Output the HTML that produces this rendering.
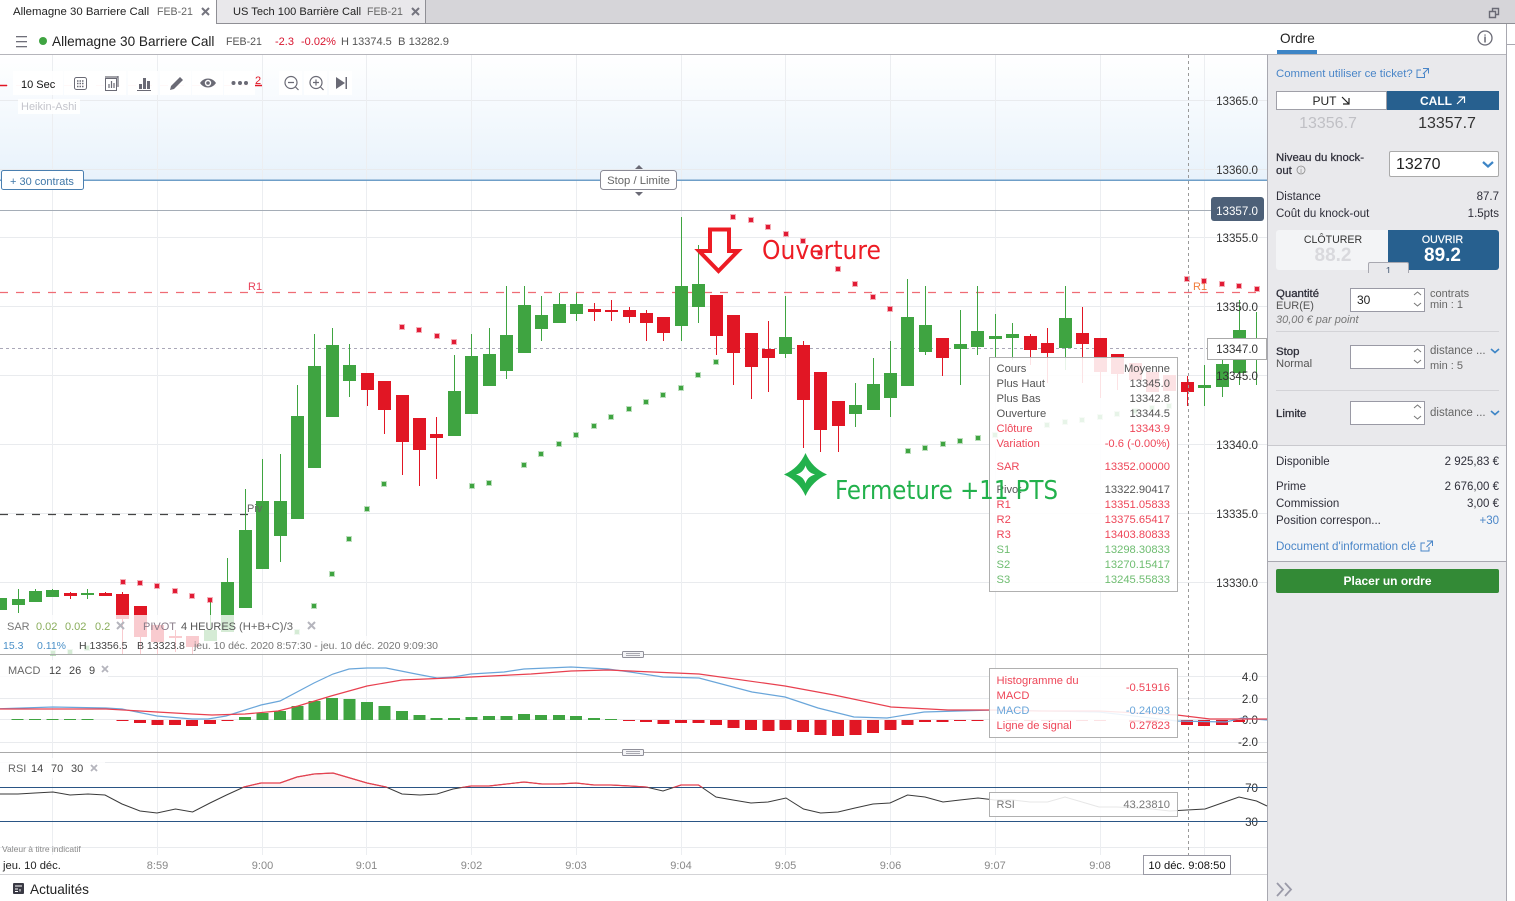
<!DOCTYPE html>
<html lang="fr"><head><meta charset="utf-8"><title>Allemagne 30 Barriere Call</title>
<style>
html,body{margin:0;padding:0;background:#fff}
body{position:relative;width:1515px;height:901px;overflow:hidden;font-family:"Liberation Sans",sans-serif;color:#2f2f3a;font-size:11.5px}
.a{position:absolute;white-space:nowrap;line-height:14px}
.r{text-align:right}
.b{font-weight:bold}
.lnk{color:#4a86c8}
.inp{position:absolute;left:1350px;width:73px;background:#fff;border:1px solid #9a9aa5;box-sizing:content-box}
svg{position:absolute;left:0;top:0}
text{font-family:"Liberation Sans",sans-serif}
</style></head><body>
<!-- tabs -->
<div class="a" style="left:0;top:0;width:1515px;height:23px;background:#d6d5d9"></div>
<div class="a" style="left:0;top:0;width:216px;height:24px;background:#fff"></div>
<div class="a" style="left:216px;top:0;width:210px;height:23px;background:#e9e8eb;border-left:1px solid #8f8f95;border-right:1px solid #8f8f95;box-sizing:border-box"></div>
<div class="a" style="left:216px;top:23px;width:1299px;height:1px;background:#8f8f95"></div>
<div class="a" style="left:13px;top:5px;font-size:11.4px;color:#222">Allemagne 30 Barriere Call</div>
<div class="a" style="left:157px;top:5px;font-size:10.6px;color:#666">FEB-21</div>
<div class="a" style="left:233px;top:5px;font-size:11.1px;color:#222">US Tech 100 Barrière Call</div>
<div class="a" style="left:367px;top:5px;font-size:10.6px;color:#666">FEB-21</div>
<!-- subheader -->
<div class="a" style="left:0;top:54px;width:1267px;height:1px;background:#b5b5bb"></div>
<div class="a" style="left:52px;top:35px;font-size:13.6px;color:#222">Allemagne 30 Barriere Call</div>
<div class="a" style="left:226px;top:35px;font-size:10.6px;color:#555">FEB-21</div>
<div class="a" style="left:275px;top:35px;font-size:11px;color:#d8152f">-2.3</div>
<div class="a" style="left:301px;top:35px;font-size:11px;color:#d8152f">-0.02%</div>
<div class="a" style="left:341px;top:35px;font-size:11px;color:#555">H 13374.5</div>
<div class="a" style="left:398px;top:35px;font-size:11.2px;color:#555">B 13282.9</div>
<!-- right panel -->
<div class="a" style="left:1267px;top:54px;width:240px;height:847px;background:#e9e9ec;border-left:1px solid #a8a8b0;border-right:1px solid #a8a8b0;border-top:1px solid #b5b5bb;box-sizing:border-box"></div>
<div class="a" style="left:1268px;top:445px;width:238px;height:115px;background:#f3f4f6;border-top:1px solid #c9c9ce;border-bottom:1px solid #a8a8b0"></div>
<div class="a" style="left:1506px;top:24px;width:1px;height:31px;background:#a8a8b0"></div>
<div class="a" style="left:1507px;top:44px;width:8px;height:1px;background:#a8a8b0"></div>
<div class="a" style="left:1280px;top:32px;font-size:13.6px;color:#222">Ordre</div>
<div class="a" style="left:1277px;top:50px;width:40px;height:4px;background:#3d85c6"></div>
<div class="a lnk" style="left:1276px;top:67px;font-size:11.4px">Comment utiliser ce ticket?</div>
<div class="a" style="left:1276px;top:91px;width:111px;height:19px;background:#fff;border:1px solid #a0a0a8;box-sizing:border-box;text-align:center;font-size:12px;color:#222;line-height:18px;padding-right:14px">PUT</div>
<div class="a" style="left:1387px;top:91px;width:112px;height:19px;background:#27608f;text-align:center;font-size:12px;color:#fff;line-height:20px;font-weight:bold;padding-right:14px;box-sizing:border-box">CALL</div>
<div class="a" style="left:1276px;top:115px;width:104px;text-align:center;font-size:16px;line-height:18px;color:#c0c0c5">13356.7</div>
<div class="a" style="left:1395px;top:115px;width:104px;text-align:center;font-size:16px;line-height:18px;color:#333">13357.7</div>
<div class="a" style="left:1276px;top:152px;color:#2f2f3a;font-size:11.4px;line-height:13px;-webkit-text-stroke:.25px #2f2f3a">Niveau du knock-<br>out</div>
<div class="a" style="left:1389px;top:151px;width:110px;height:26px;background:#fff;border:1px solid #aaa;border-radius:2px;box-sizing:border-box;font-size:16px;line-height:26px;padding-left:6px;color:#222">13270</div>
<div class="a" style="left:1276px;top:190px">Distance</div><div class="a r" style="left:1440px;width:59px;top:190px">87.7</div>
<div class="a" style="left:1276px;top:207px">Coût du knock-out</div><div class="a r" style="left:1440px;width:59px;top:207px">1.5pts</div>
<div class="a" style="left:1276px;top:230px;width:112px;height:40px;background:#f3f4f6;border-radius:3px 0 0 3px"></div>
<div class="a" style="left:1388px;top:230px;width:111px;height:40px;background:#27608f;border-radius:0 3px 3px 0"></div>
<div class="a" style="left:1276px;top:233px;width:114px;text-align:center;color:#333;font-size:10.6px">CLÔTURER</div>
<div class="a" style="left:1276px;top:246px;width:114px;text-align:center;font-size:19px;line-height:19px;font-weight:bold;color:#d9d9dd">88.2</div>
<div class="a" style="left:1388px;top:233px;width:109px;text-align:center;color:#fff;font-size:10.6px;-webkit-text-stroke:.2px #fff">OUVRIR</div>
<div class="a" style="left:1388px;top:246px;width:109px;text-align:center;font-size:19px;line-height:19px;font-weight:bold;color:#fff">89.2</div>
<div class="a" style="left:1368px;top:262px;width:39px;height:10px;background:#e9e9ec;border:1px solid #a8a8b0;border-bottom:0;border-radius:2px 2px 0 0;text-align:center;font-size:10px;line-height:17px;color:#4d6078;overflow:hidden">1</div>
<div class="a b" style="left:1276px;top:287px;font-size:11.4px;font-weight:normal;-webkit-text-stroke:.3px #2f2f3a">Quantité</div>
<div class="a" style="left:1276px;top:299px;color:#555;font-size:11px">EUR(E)</div>
<div class="a" style="left:1276px;top:313px;font-style:italic;color:#777;font-size:11px">30,00 € par point</div>
<div class="inp" style="top:288px;height:22px;font-size:12px;line-height:22px;padding-left:0;text-indent:6px;color:#222">30</div>
<div class="a" style="left:1430px;top:287px;color:#666;font-size:11px">contrats</div>
<div class="a" style="left:1430px;top:298px;color:#666;font-size:11px">min : 1</div>
<div class="a" style="left:1276px;top:331px;width:223px;height:1px;background:#d3d3d7"></div>
<div class="a" style="left:1276px;top:345px;font-size:11.4px;-webkit-text-stroke:.3px #2f2f3a">Stop</div>
<div class="a" style="left:1276px;top:357px;color:#555;font-size:11.2px">Normal</div>
<div class="inp" style="top:345px;height:22px"></div>
<div class="a" style="left:1430px;top:344px;color:#666">distance ...</div>
<div class="a" style="left:1430px;top:359px;color:#666;font-size:11px">min : 5</div>
<div class="a" style="left:1276px;top:390px;width:223px;height:1px;background:#d3d3d7"></div>
<div class="a" style="left:1276px;top:407px;font-size:11.4px;-webkit-text-stroke:.3px #2f2f3a">Limite</div>
<div class="inp" style="top:401px;height:22px"></div>
<div class="a" style="left:1430px;top:406px;color:#666">distance ...</div>
<div class="a" style="left:1276px;top:455px">Disponible</div><div class="a r" style="left:1420px;width:79px;top:455px">2 925,83 €</div>
<div class="a" style="left:1276px;top:480px">Prime</div><div class="a r" style="left:1420px;width:79px;top:480px">2 676,00 €</div>
<div class="a" style="left:1276px;top:497px">Commission</div><div class="a r" style="left:1420px;width:79px;top:497px">3,00 €</div>
<div class="a" style="left:1276px;top:514px">Position correspon...</div><div class="a r lnk" style="left:1420px;width:79px;top:514px">+30</div>
<div class="a lnk" style="left:1276px;top:540px;font-size:11.6px">Document d'information clé</div>
<div class="a" style="left:1276px;top:569px;width:223px;height:24px;background:#338a36;border-radius:2px;color:#fff;font-weight:bold;font-size:12px;line-height:24px;text-align:center">Placer un ordre</div>
<div class="a" style="left:30px;top:883px;font-size:13.6px;color:#222">Actualités</div>

<svg width="1515" height="901" viewBox="0 0 1515 901" xmlns="http://www.w3.org/2000/svg">
<defs>
<linearGradient id="g" x1="0" y1="0" x2="0" y2="1"><stop offset="0" stop-color="#fff"/><stop offset="1" stop-color="#e8f2fb"/></linearGradient>
<clipPath id="up"><rect x="0" y="760" width="1267" height="27.5"/></clipPath>
</defs>
<!-- top small icons -->
<path d="M202 8l7 7M209 8l-7 7M412 8l7 7M419 8l-7 7" stroke="#75757f" stroke-width="2" fill="none"/>
<g fill="#6f6f7a"><rect x="16" y="36" width="11" height="1.3"/><rect x="16" y="41" width="11" height="1.3"/><rect x="16" y="46" width="11" height="1.3"/></g>
<circle cx="43" cy="41" r="4" fill="#3fa441"/>
<path d="M1489.5 11.5h6v6h-6zM1492.5 11v-2.5h6v6h-3" fill="none" stroke="#6a6a75" stroke-width="1.4"/>
<circle cx="1485" cy="38" r="7" fill="none" stroke="#6a6a75" stroke-width="1.3"/><text x="1485" y="42.5" font-size="11" font-weight="bold" fill="#6a6a75" text-anchor="middle">i</text>
<path d="M1421 70h-4v7.5h7.5v-4M1423 68.5h5.5v5M1428 69l-5 5" fill="none" stroke="#4a86c8"/>
<path d="M1425 543h-4v8h8v-4M1427 541h5.5v5M1432 541.5l-5.500 5.500" fill="none" stroke="#4a86c8"/>
<path d="M1342 97l7 7M1349 98v6h-6" fill="none" stroke="#222" stroke-width="1.2"/>
<path d="M1457 104l7-7M1458.500 97h6v6" fill="none" stroke="#fff" stroke-width="1.2"/>
<circle cx="1301" cy="170" r="4" fill="none" stroke="#888" stroke-width=".8"/><text x="1301" y="173" font-size="7" fill="#888" text-anchor="middle">i</text>
<path d="M1483 162l5 4.500 5-4.500" fill="none" stroke="#3d85c6" stroke-width="2.200"/>
<path d="M1414 295l3.500-3 3.500 3M1414 303l3.500 3 3.500-3M1414 352l3.500-3 3.500 3M1414 360l3.500 3 3.500-3M1414 408l3.500-3 3.500 3M1414 416l3.500 3 3.500-3" fill="none" stroke="#777"/>
<path d="M1491 349l4 3.500 4-3.500M1491 411l4 3.500 4-3.500" fill="none" stroke="#3d85c6" stroke-width="1.600"/>
<path d="M1277 883l6 6.500-6 6.500M1285 883l6 6.500-6 6.500" fill="none" stroke="#9a9aa8" stroke-width="1.800"/>
<!-- news icon -->
<rect x="13" y="883" width="11" height="11" rx="1" fill="#3a3a45"/><path d="M15 886h7M15 889h3M15 891.500h3M20 889v2.500" stroke="#fff"/>

<!-- chart bg -->
<rect x="0" y="55" width="1267" height="125" fill="url(#g)"/>
<!-- grid -->
<path d="M0 100.500H1267M0 169.500H1267M0 237.500H1267M0 306.500H1267M0 375.500H1267M0 444.500H1267M0 513.500H1267M0 582.500H1267M0 676.500H1267M0 698.500H1267M0 719.500H1267M0 742.500H1267M0 762.500H1267M0 847.500H1267" stroke="#e9ebee"/>
<path d="M52.500 55V855M157.500 55V855M262.500 55V855M366.500 55V855M471.500 55V855M576.500 55V855M681.500 55V855M785.500 55V855M890.500 55V855M995.500 55V855M1100.500 55V855M1204.500 55V855" stroke="#eceef1"/>
<!-- level lines -->
<path d="M0 85.500H262" stroke="#f9c2c6" stroke-dasharray="8 8"/>
<path d="M0 85.500H7M255 85.500H262" stroke="#e11624" stroke-width="1.500"/>
<rect x="0" y="179.500" width="1267" height="1.500" fill="#6f9fc8"/>
<path d="M0 210.500H1212" stroke="#a5adb7"/>
<path d="M0 292.500H1262" stroke="#ef6c74" stroke-width="1.200" stroke-dasharray="8 8"/>
<path d="M0 514.500H262" stroke="#444" stroke-width="1.200" stroke-dasharray="8 8"/>
<text x="248" y="290" font-size="11" fill="#e8425a">R1</text>
<text x="1193" y="290" font-size="11" fill="#f07d3c">R1</text>
<path d="M0 348.500H1210" stroke="#aaa8b8" stroke-dasharray="3 3"/>
<!-- wicks -->
<path fill="none" stroke="#3fa441" d="M18.500 589V613M35.500 589V591M52.500 589V590M87.500 589V599M210.500 602V641M227.500 558V582M245.500 489V530M262.500 459V501M280.500 454V562M297.500 385V416M314.500 334V366M332.500 328V345M349.500 344V397M454.500 355V391M471.500 334V356M489.500 328V354M506.500 286V379M524.500 286V305M541.500 296V341M559.500 293V304M576.500 293V321M681.500 217V341M698.500 245V323M785.500 296V358M855.500 383V427M873.500 358V384M890.500 341V417M907.500 279V317M925.500 286V355M960.500 310V385M977.500 286V355M995.500 314V357M1012.500 323V360M1065.500 286V370M1204.500 365V406M1222.500 357V397M1239.500 300V385M1256.500 312V385"/>
<path fill="none" stroke="#e11624" d="M70.500 592V599M105.500 592V596M122.500 592V654M140.500 606V654M157.500 625V654M175.500 630V652M192.500 636V654M367.500 373V406M384.500 381V434M402.500 395V475M419.500 418V486M436.500 417V479M594.500 303V321M611.500 300V321M629.500 307V323M646.500 310V341M663.500 317V341M716.500 295V355M733.500 315V385M751.500 333V399M768.500 321V392M803.500 341V448M820.500 372V452M838.500 401V452M942.500 338V376M1030.500 334V365M1047.500 328V383M1082.500 307V383M1100.500 338V398M1117.500 354V390M1187.500 376V406"/>
<!-- bodies -->
<path fill="none" stroke="#3fa441" stroke-width="13" d="M0.500 598V610M18.500 599V605M35.500 591V602M52.500 590V597M87.500 593V595M210.500 630V641M227.500 582V632M245.500 530V608M262.500 501V569M280.500 501V536M297.500 416V519M314.500 366V468M332.500 345V417M349.500 365V381M454.500 391V436M471.500 356V414M489.500 354V386M506.500 335V371M524.500 305V353M541.500 315V329M559.500 304V323M576.500 304V314M681.500 286V326M698.500 284V307M785.500 337V354M855.500 405V414M873.500 384V410M890.500 373V398M907.500 317V386M925.500 325V352M960.500 344V349M977.500 331V347M995.500 336V339M1012.500 334V338M1065.500 318V348M1204.500 385V388M1222.500 364V387M1239.500 330V373"/>
<path fill="none" stroke="#e11624" stroke-width="13" d="M70.500 593V596M105.500 593V596M122.500 594V619M140.500 606V637M157.500 625V642M175.500 636V638M192.500 636V647M367.500 373V390M384.500 381V410M402.500 395V442M419.500 418V450M436.500 434V438M594.500 309V312M611.500 310V312M629.500 310V317M646.500 313V323M663.500 317V333M716.500 295V336M733.500 315V353M751.500 333V367M768.500 349V358M803.500 345V400M820.500 372V430M838.500 401V426M942.500 338V358M1030.500 336V350M1047.500 343V353M1082.500 333V344M1100.500 338V372M1117.500 354V374M1135.500 363V380M1152.500 372V392M1169.500 375V391M1187.500 382V392"/>
<!-- SAR dots -->
<g fill="none" stroke-linecap="butt">
<path stroke="#e11c35" stroke-opacity=".35" stroke-width="6" d="M120 582h6M137 583h6M154 586h6M172 591h6M189 596h6M207 600h6M399 327h6M416 330h6M434 336h6M451 342h6M730 217h6M748 220h6M765 227h6M783 234h6M800 241h6M817 253h6M835 269h6M852 284h6M870 297h6M887 309h6M1184 279h6M1201 281h6M1219 284h6M1236 286h6M1254 289h6"/>
<path stroke="#e11c35" stroke-width="4" d="M121 582h4M138 583h4M155 586h4M173 591h4M190 596h4M208 600h4M400 327h4M417 330h4M435 336h4M452 342h4M731 217h4M749 220h4M766 227h4M784 234h4M801 241h4M818 253h4M836 269h4M853 284h4M871 297h4M888 309h4M1185 279h4M1202 281h4M1220 284h4M1237 286h4M1255 289h4"/>
<path stroke="#3fa441" stroke-opacity=".35" stroke-width="6" d="M50 653h6M67 652h6M84 648h6M294 632h6M311 606h6M329 574h6M346 539h6M364 509h6M381 484h6M469 486h6M486 483h6M521 465h6M538 454h6M556 444h6M573 435h6M591 426h6M608 417h6M626 409h6M643 402h6M660 395h6M678 388h6M695 375h6M713 362h6M905 451h6M922 448h6M940 444h6M957 441h6M975 438h6M992 435h6M1044 425h6M1062 422h6M1079 420h6M1097 417h6M1114 414h6M1132 411h6M1149 408h6M1166 406h6"/>
<path stroke="#3fa441" stroke-width="4" d="M51 653h4M68 652h4M85 648h4M295 632h4M312 606h4M330 574h4M347 539h4M365 509h4M382 484h4M470 486h4M487 483h4M522 465h4M539 454h4M557 444h4M574 435h4M592 426h4M609 417h4M627 409h4M644 402h4M661 395h4M679 388h4M696 375h4M714 362h4M906 451h4M923 448h4M941 444h4M958 441h4M976 438h4M993 435h4M1045 425h4M1063 422h4M1080 420h4M1098 417h4M1115 414h4M1133 411h4M1150 408h4M1167 406h4"/>
</g>
<!-- axis labels -->
<g font-size="11.600" fill="#333" text-anchor="end">
<text x="1258" y="105">13365.0</text><text x="1258" y="174">13360.0</text><text x="1258" y="242">13355.0</text><text x="1258" y="311">13350.0</text><text x="1258" y="380">13345.0</text><text x="1258" y="449">13340.0</text><text x="1258" y="518">13335.0</text><text x="1258" y="587">13330.0</text>
<text x="1258" y="681">4.0</text><text x="1258" y="703">2.0</text><text x="1258" y="724">0.0</text><text x="1258" y="746">-2.0</text>
<text x="1258" y="792">70</text><text x="1258" y="826">30</text>
</g>
<rect x="1211" y="197" width="53" height="24" rx="3" fill="#4d6078"/><text x="1258" y="215" font-size="11.600" fill="#fff" text-anchor="end">13357.0</text>
<rect x="1207.500" y="338.500" width="59" height="21" fill="#fff" stroke="#aaa"/><text x="1258" y="353" font-size="11.600" fill="#333" text-anchor="end">13347.0</text>
<!-- crosshair vertical -->
<path d="M1188.500 55V855" stroke="#999" stroke-dasharray="3 3"/>
<!-- order labels -->
<rect x="1.500" y="170.500" width="82" height="19" rx="2" fill="#fff" stroke="#4a7fb0"/>
<text x="10" y="185" font-size="11" fill="#3f77a8">+ 30 contrats</text>
<path d="M635 169l4-4 4 4zM635 192l4 4 4-4z" fill="#6a6a75"/>
<rect x="600.500" y="170.500" width="76" height="19" rx="3" fill="#fff" stroke="#8a8a95"/>
<text x="638.500" y="184" font-size="11.300" fill="#666" text-anchor="middle">Stop / Limite</text>
<!-- toolbar -->
<g fill="#fff" fill-opacity=".88">
<rect x="13" y="71" width="50" height="24"/><rect x="64" y="71" width="32" height="24"/><rect x="96" y="71" width="30" height="24"/><rect x="128" y="71" width="30" height="24"/><rect x="160" y="71" width="31" height="24"/><rect x="192" y="71" width="31" height="24"/><rect x="224" y="71" width="31" height="24"/><rect x="279" y="71" width="23" height="24"/><rect x="304" y="71" width="23" height="24"/><rect x="329" y="71" width="23" height="24"/><rect x="18" y="99" width="62" height="15"/>
</g>
<text x="21" y="88" font-size="11" fill="#111">10 Sec</text>
<text x="21" y="110" font-size="11" fill="#c4c5cc">Heikin-Ashi</text>
<text x="255" y="84" font-size="11" fill="#e11624">2</text>
<rect x="74.500" y="77.500" width="12" height="12" rx="2" fill="none" stroke="#6a6a75"/>
<path d="M77 81h7M77 83.500h7M77 86.500h7" stroke="#6a6a75" stroke-width="1.500" stroke-dasharray="1.500 1"/>
<rect x="105.500" y="78.500" width="11" height="12" fill="none" stroke="#6a6a75"/><path d="M105 77h13M109 84v4M111.500 81v7M114 83v5M118 76v11" stroke="#6a6a75" fill="none" stroke-width="1.200"/>
<path d="M139 84h3v5h-3zM143 78h3v11h-3zM147 81h3v8h-3zM137 90h14v1h-14z" fill="#6a6a75"/>
<path d="M170 90l1-4 9-9 3 3-9 9z" fill="#6a6a75"/>
<path d="M200 83c4-6 12-6 16 0-4 6-12 6-16 0z" fill="#6a6a75"/><circle cx="208" cy="83" r="3.200" fill="#fff"/><circle cx="208" cy="83" r="1.800" fill="#6a6a75"/>
<circle cx="233.500" cy="83" r="2" fill="#6a6a75"/><circle cx="240" cy="83" r="2" fill="#6a6a75"/><circle cx="246" cy="83" r="2" fill="#6a6a75"/>
<g fill="none" stroke="#6a6a75" stroke-width="1.200"><circle cx="291" cy="82.500" r="6"/><path d="M288 82.500h6M295.500 87l3 3"/><circle cx="316" cy="82.500" r="6"/><path d="M313 82.500h6M316 79.500v6M320.500 87l3 3"/></g>
<path d="M336 77l9 6-9 6z M345.500 77h1.500v12h-1.500z" fill="#6a6a75"/>
<!-- annotations -->
<polygon points="710,229.500 729,229.500 729,251 738,251 718.500,271 699,251 710,251" fill="#fff" stroke="#ed1c24" stroke-width="4"/>
<text x="762" y="259" font-size="26" fill="#ed1c24" textLength="119" lengthAdjust="spacingAndGlyphs" style="font-family:'DejaVu Sans',sans-serif">Ouverture</text>
<path d="M805.500 453Q812 468 827 474.500Q812 481 805.500 496Q799 481 784 474.500Q799 468 805.500 453Z" fill="#22b14c"/>
<path d="M805.500 465.500Q807.500 472.500 815 474.500Q807.500 476.500 805.500 483.500Q803.500 476.500 796 474.500Q803.500 472.500 805.500 465.500Z" fill="#fff"/>
<text x="247" y="512" font-size="11" fill="#666">Piv</text>
<!-- legend overlay -->
<rect x="0" y="615" width="320" height="39" fill="#fff" fill-opacity=".78"/>
<rect x="320" y="636" width="120" height="18" fill="#fff" fill-opacity=".78"/>
<g font-size="11">
<text x="7" y="630" fill="#777">SAR</text><text x="36" y="630" fill="#89ad5b">0.02</text><text x="65" y="630" fill="#89ad5b">0.02</text><text x="95" y="630" fill="#89ad5b">0.2</text>
<text x="143" y="630" fill="#8a7d8a">PIVOT</text><text x="181" y="630" fill="#555">4 HEURES</text><text x="239" y="630" font-size="11.300" fill="#666">(H+B+C)/3</text>
</g>
<path d="M117 622l7 7M124 622l-7 7M308 622l7 7M315 622l-7 7" stroke="#b5b5bd" stroke-width="2"/>
<g font-size="10.500">
<text x="3" y="649" fill="#4a90c8">15.3</text><text x="37" y="649" fill="#4a90c8">0.11%</text><text x="79" y="649" fill="#444">H 13356.5</text><text x="137" y="649" fill="#444">B 13323.8</text><text x="194" y="649" fill="#777" textLength="244">jeu. 10 déc. 2020 8:57:30 - jeu. 10 déc. 2020 9:09:30</text>
</g>
<!-- panel separators -->
<path d="M0 654.500H1267M0 752.500H1267" stroke="#a9a9a9"/>
<rect x="622.500" y="651.500" width="21" height="6" rx="1" fill="#f4f4f6" stroke="#8f8f99"/><path d="M626 653.500h14M626 655.500h14" stroke="#8f8f99" stroke-width=".8"/>
<rect x="622.500" y="749.500" width="21" height="6" rx="1" fill="#f4f4f6" stroke="#8f8f99"/><path d="M626 751.500h14M626 753.500h14" stroke="#8f8f99" stroke-width=".8"/>
<!-- MACD histogram -->
<path fill="none" stroke="#3fa441" stroke-width="12" d="M17.500 719V720M35 719V720M52.500 719V720M70 719V720M87.500 719V720M245 717V720M262.500 713V720M280 711V720M297.500 706V720M314.500 701V720M332 698V720M349.500 699V720M367 702V720M384.500 706V720M402 711V720M419.500 715V720M436.500 718V720M454 718V720M471.500 717V720M489 716V720M506.500 716V720M524 714V720M541 715V720M559 715V720M576 716V720M594 718V720M611 719V720"/>
<path fill="none" stroke="#e11624" stroke-width="12" d="M122.500 720V721M140 720V723M157.500 720V725M175 720V725M192 720V726M210 720V724M227.500 720V721M629 720V721M646 720V722M663.500 720V724M681 720V723M698.500 720V723M716 720V725M733.500 720V728M751 720V730M768.500 720V731M785.500 720V730M803 720V732M820.500 720V735M838 720V736M855.500 720V735M873 720V733M890.500 720V730M907.500 720V725M925 720V722M942.500 720V722M960 720V721M977.500 720V721M1012 720V721M1030 720V721M1047 720V721M1065 720V721M1082 720V721M1100 720V721M1135 720V722M1152 720V722M1187 720V725M1204 720V726M1222 720V725M1239 720V722"/>
<path fill="none" stroke="#6aa6da" stroke-width="1.200" d="M0 708.700L53 707L106 708L122 709L157 716L192 719L208 719L226 716L261 705L280 701L314 683L333 674L349 669L367 668L386 668L416 674L437 678L453 677L471 674L504 672L524 669L571 667L608 669L630 672L663 677L699 678L752 692L785 697L818 708L854 717L887 718L924 712L993 710L1099 712L1177 721L1226 722L1242 718L1267 720"/>
<path fill="none" stroke="#e8404f" stroke-width="1.200" d="M0 709L106 709L157 712L192 714L212 715L245 714L278 711L298 706L331 696L367 686L402 680L449 678L471 677L531 674L571 671L608 670L630 671L699 674L785 686L834 695L891 707L948 710L993 710L1038 711L1099 711L1177 715L1210 719L1267 719"/>
<rect x="0" y="660" width="108" height="20" fill="#fff" fill-opacity=".8"/>
<g font-size="11" fill="#666"><text x="8" y="674">MACD</text><text x="49" y="674" fill="#444">12</text><text x="69" y="674" fill="#444">26</text><text x="89" y="674" fill="#444">9</text></g>
<!-- RSI -->
<path d="M0 787.500H1267M0 821.500H1267" stroke="#2a5585"/>
<polygon clip-path="url(#up)" fill="#e11c35" fill-opacity=".06" points="226,787.500 244,787 261,783 280,783 297,777 314,774 333,773 350,778 367,783 386,787 386,787.500"/>
<polyline fill="none" stroke="#3a3a3a" stroke-width="1" points="0,794 18,794 35,793 53,792 70,795 88,794 105,795 122,804 140,811 157,813 175.500,809 192.600,812 210,803 226.500,795 244,787 261,783 280,783 297,777 314,774 333,773 350,778 367,783 386,787 402,794 420,795 437,794 453,789 471,786 489,786 506.500,784 524,782 542,784 559,784 576,783 594,785 611,785 630,786 646,787 663,791 681,785 698.500,785 716,797 733,800 751,803 768,802 786,798 803.500,809 820.600,813 838,812 855,808 873,804 890,803 907.500,795 925,797 943,802 960,800 978,798 995,800 1013,800 1030,802 1047.500,802 1065,797 1082,802 1099,807 1117,807 1134.500,808 1152,809 1169.600,811 1187,810 1205,809 1222,803 1239,797 1256.500,801 1267,806"/>
<polyline clip-path="url(#up)" fill="none" stroke="#e8404f" stroke-width="1.200" points="0,794 18,794 35,793 53,792 70,795 88,794 105,795 122,804 140,811 157,813 175.500,809 192.600,812 210,803 226.500,795 244,787 261,783 280,783 297,777 314,774 333,773 350,778 367,783 386,787 402,794 420,795 437,794 453,789 471,786 489,786 506.500,784 524,782 542,784 559,784 576,783 594,785 611,785 630,786 646,787 663,791 681,785 698.500,785 716,797"/>
<rect x="0" y="758" width="105" height="20" fill="#fff" fill-opacity=".8"/>
<g font-size="11"><text x="8" y="772" fill="#666">RSI</text><text x="31" y="772" fill="#444">14</text><text x="51" y="772" fill="#444">70</text><text x="71" y="772" fill="#444">30</text></g>
<path d="M102 666l6 6M108 666l-6 6M91 765l6 6M97 765l-6 6" stroke="#b5b5bd" stroke-width="1.800"/>
<!-- tooltips -->
<rect x="989.500" y="357.500" width="188" height="234" fill="#fff" fill-opacity=".88" stroke="#b0b0b0"/>
<g font-size="11.200" fill="#555">
<text x="996.500" y="372">Cours</text><text x="1170" y="372" text-anchor="end">Moyenne</text>
<text x="996.500" y="387">Plus Haut</text><text x="1170" y="387" text-anchor="end">13345.0</text>
<text x="996.500" y="402">Plus Bas</text><text x="1170" y="402" text-anchor="end">13342.8</text>
<text x="996.500" y="417">Ouverture</text><text x="1170" y="417" text-anchor="end">13344.5</text>
<g fill="#ee4658"><text x="996.500" y="432">Clôture</text><text x="1170" y="432" text-anchor="end">13343.9</text>
<text x="996.500" y="447">Variation</text><text x="1170" y="447" text-anchor="end">-0.6 (-0.00%)</text>
<text x="996.500" y="470">SAR</text><text x="1170" y="470" text-anchor="end">13352.00000</text></g>
<text x="996.500" y="493">Pivot</text><text x="1170" y="493" text-anchor="end">13322.90417</text>
<g fill="#ee4658"><text x="996.500" y="508">R1</text><text x="1170" y="508" text-anchor="end">13351.05833</text>
<text x="996.500" y="523">R2</text><text x="1170" y="523" text-anchor="end">13375.65417</text>
<text x="996.500" y="538">R3</text><text x="1170" y="538" text-anchor="end">13403.80833</text></g>
<g fill="#6fbd71"><text x="996.500" y="553">S1</text><text x="1170" y="553" text-anchor="end">13298.30833</text>
<text x="996.500" y="568">S2</text><text x="1170" y="568" text-anchor="end">13270.15417</text>
<text x="996.500" y="583">S3</text><text x="1170" y="583" text-anchor="end">13245.55833</text></g>
</g>
<text x="835" y="499" font-size="26" fill="#22b14c" textLength="223" lengthAdjust="spacingAndGlyphs" style="font-family:'DejaVu Sans',sans-serif">Fermeture +11 PTS</text>
<rect x="989.500" y="668.500" width="188" height="69" fill="#fff" fill-opacity=".88" stroke="#b0b0b0"/>
<g font-size="11.200" fill="#ee4658">
<text x="996.500" y="684">Histogramme du</text><text x="996.500" y="699">MACD</text><text x="1170" y="691" text-anchor="end">-0.51916</text>
<text x="996.500" y="714" fill="#6aa6da">MACD</text><text x="1170" y="714" text-anchor="end" fill="#6aa6da">-0.24093</text>
<text x="996.500" y="729">Ligne de signal</text><text x="1170" y="729" text-anchor="end">0.27823</text>
</g>
<rect x="989.500" y="792.500" width="188" height="24" fill="#fff" fill-opacity=".88" stroke="#b0b0b0"/>
<text x="996.500" y="808" font-size="11" fill="#777">RSI</text><text x="1170" y="808" font-size="11.200" fill="#777" text-anchor="end">43.23810</text>
<!-- time axis -->
<text x="2" y="852" font-size="8.500" fill="#888">Valeur à titre indicatif</text>
<path d="M0 874.500H1267" stroke="#d3d3d6"/>
<g font-size="11" fill="#888" text-anchor="middle">
<text x="157.500" y="869">8:59</text><text x="262.500" y="869">9:00</text><text x="366.500" y="869">9:01</text><text x="471.500" y="869">9:02</text><text x="576" y="869">9:03</text><text x="681" y="869">9:04</text><text x="785.500" y="869">9:05</text><text x="890.500" y="869">9:06</text><text x="995" y="869">9:07</text><text x="1100" y="869">9:08</text>
</g>
<text x="3" y="869" font-size="11.200" fill="#222">jeu. 10 déc.</text>
<rect x="1143.500" y="855.500" width="87" height="19" fill="#fff" stroke="#9a9aa5"/>
<text x="1187" y="869" font-size="11.200" fill="#111" text-anchor="middle">10 déc. 9:08:50</text>
</svg>
</body></html>
